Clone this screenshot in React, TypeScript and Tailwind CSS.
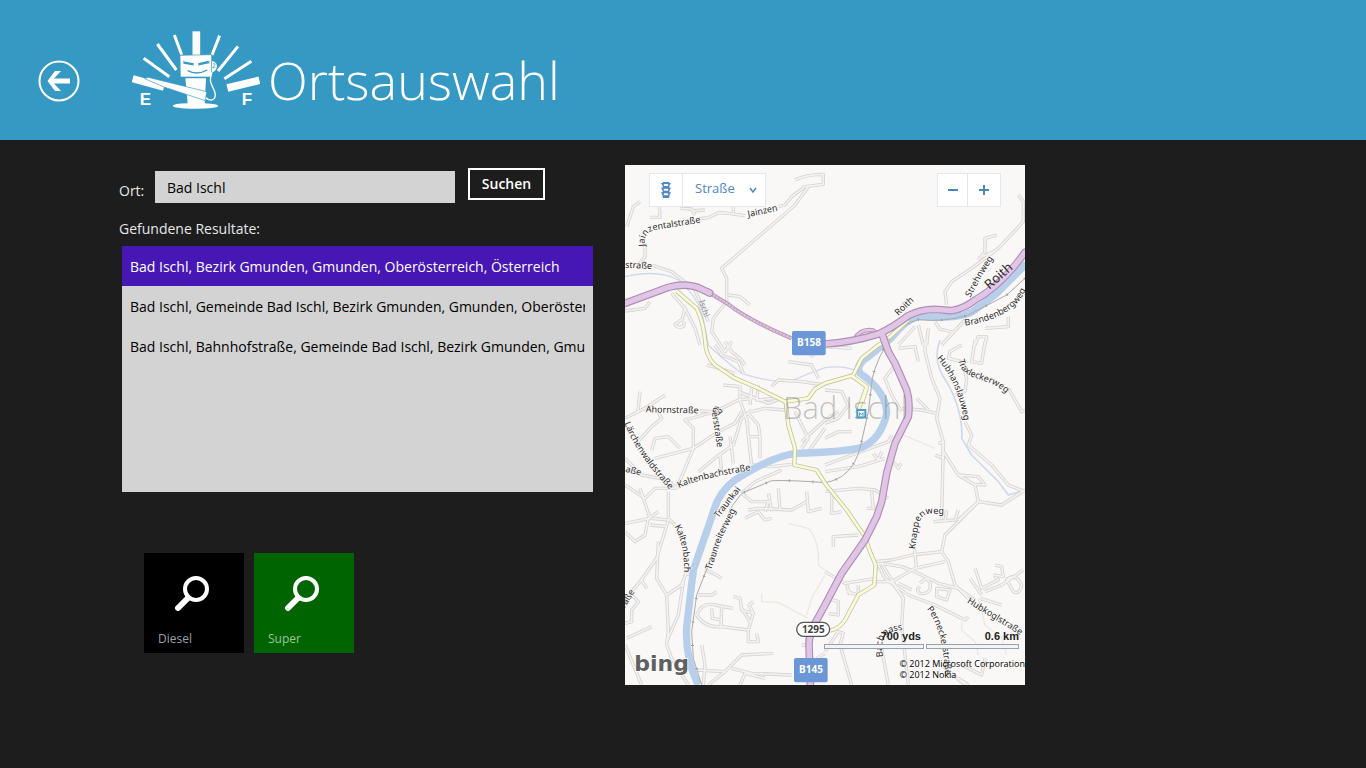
import { useState } from 'react';

const results = [
	'Bad Ischl, Bezirk Gmunden, Gmunden, Oberösterreich, Österreich',
	'Bad Ischl, Gemeinde Bad Ischl, Bezirk Gmunden, Gmunden, Oberösterreich, Österreich',
	'Bad Ischl, Bahnhofstraße, Gemeinde Bad Ischl, Bezirk Gmunden, Gmunden, Oberösterreich',
];

const streets = [
	'M60 235 L60 275 L40 300',
	'M220 162 L250 158 L280 143 L310 145 L360 152',
	'M460 125 L480 120 L500 95 L540 65 L595 58 L595 28 Q545 28 510 45',
	'M550 65 L510 120 L470 155 L290 310 L305 340 L305 410 L265 460 L260 500 L300 560 L320 530',
	'M45 110 L25 125 L5 185',
	'M75 157 L105 157 L103 125',
	'M165 130 L200 132 L210 150 M200 138 L240 135',
	'M325 125 L325 148',
	'M80 300 L140 320 L210 375 L250 470',
	'M140 385 L180 430 L210 490 L225 540',
	'M180 430 L172 462 L150 478 Q155 490 175 485 L178 470',
	'M310 390 L345 395 L375 420',
	'M0 438 L60 430 L75 410',
	'M965 420 L960 380 L980 350 L1040 310 L1120 250 L1195 170 L1195 110 L1180 90',
	'M1115 210 L1080 220 L1080 260 L1060 285 M1060 280 L1110 258',
	'M870 485 L820 540',
	'M880 480 L895 540 M910 490 L905 540',
	'M930 470 L945 492 L985 502 L950 540 M985 502 L1020 465',
	'M1050 540 L1060 515 L1085 515 L1080 540',
	'M1080 490 L1150 485 L1150 455',
	'M0 760 L60 730 L120 690',
	'M45 680 L38 745',
	'M225 738 L270 740 L340 705 L380 700',
	'M30 840 L75 790 L110 760 L95 735',
	'M80 855 L90 820 L130 815 L165 850',
	'M90 880 L205 850 L280 800 L330 775 L350 740',
	'M205 850 L205 790 L180 765 L290 735',
	'M205 850 L155 970',
	'M220 920 L275 875 L325 840 L350 760 L380 735',
	'M285 870 L290 920',
	'M315 815 L325 895',
	'M365 760 L370 815 L380 900',
	'M370 815 L405 815 L405 880 M405 815 L400 780 L370 745',
	'M345 660 L345 705 L370 780',
	'M295 660 L345 665',
	'M380 670 L375 720 M340 680 L430 715 L470 700',
	'M400 660 L395 705 L450 700',
	'M380 740 L420 730 L480 735',
	'M270 540 L290 570 L340 590 L355 625',
	'M300 530 L320 560 L345 580 L360 600',
	'M245 600 L290 612 L330 625',
	'M440 665 L460 645 L530 650 L600 660',
	'M490 590 L560 600 L580 640',
	'M555 575 L600 545 L680 550',
	'M510 740 L550 820 L530 850',
	'M550 860 L600 790 M530 830 L600 765 L640 740',
	'M0 880 L50 930 L130 945 L155 970',
	'M0 960 L60 1000 L90 970 L155 970',
	'M45 970 L75 1060 L0 1075',
	'M130 980 L130 1060',
	'M350 985 L380 1010 L430 1010 L420 1040',
	'M430 985 L440 1040 M460 970 L465 1035',
	'M370 1035 L400 1030 L500 1035 L545 1010',
	'M545 980 L550 1040 L590 1030',
	'M380 900 L440 905 L500 898',
	'M470 915 L390 950 L350 985',
	'M900 525 L900 560 L920 640 L945 700 L935 760 L955 830 L950 1060',
	'M830 730 L890 735 L935 745',
	'M875 700 L910 735',
	'M810 600 L780 640 L800 690 L830 740',
	'M820 550 L870 545 L880 590',
	'M930 870 L955 880 L955 830 L940 835',
	'M955 860 L1000 930 L1050 960 L1060 1010 L1130 1020 L1200 975',
	'M1000 930 L1060 935 L1080 960 L1050 958',
	'M1060 1010 L1000 1065',
	'M1020 770 L1040 810 L1030 840 L1100 900 L1150 960 L1200 980',
	'M1010 540 L975 560 L970 580 L1010 590 L1025 640 L1020 680 L990 690',
	'M1050 525 L1040 590 L1070 595 L1080 530',
	'M1150 670 L1190 740 L1200 735',
	'M600 675 L650 680 L670 720 L640 760 L600 775',
	'M600 820 L640 800 L680 800',
	'M600 900 L680 870 L790 830 L800 810',
	'M600 920 L700 905 L780 880',
	'M745 865 L760 885 L770 860',
	'M805 890 L820 910 L828 895',
	'M600 980 L700 970 L750 975 L790 1000',
	'M740 980 L745 1030 L725 1030',
	'M620 980 L620 1045 L650 1040',
	'M0 1100 L30 1130 L60 1110 L70 1060 L100 1040',
	'M75 1080 L125 1085 M80 1060 L130 1065',
	'M130 1060 L150 1080',
	'M130 1065 L95 1180 L45 1250 L20 1280 L0 1310',
	'M100 1130 L95 1240 L125 1290 L170 1260 L185 1220',
	'M125 1290 L130 1400 L125 1440 L140 1480 L190 1560',
	'M175 1250 L160 1350 L125 1430',
	'M180 1225 L215 1232',
	'M50 1245 L65 1270',
	'M20 1290 L40 1310 L20 1335 L20 1370 L0 1375',
	'M5 1420 L80 1385',
	'M0 1440 L50 1560',
	'M240 1215 L265 1225 L290 1240',
	'M220 1290 L260 1290 L275 1280',
	'M215 1350 Q230 1310 270 1320 L325 1330 M215 1350 Q240 1390 290 1385 L370 1395',
	'M370 1395 L370 1430 L400 1430 L395 1405',
	'M290 1325 L288 1385 M260 1330 L262 1360 L290 1365',
	'M325 1295 L345 1300 L350 1335 L385 1345 L370 1395',
	'M350 1330 L375 1370 M385 1310 L372 1320 L385 1345',
	'M230 1440 L240 1500 L235 1560',
	'M215 1515 L300 1520 L350 1470 L445 1465',
	'M320 1510 L380 1525 L500 1530',
	'M250 1560 L300 1520 M345 1560 L360 1525 L420 1540',
	'M360 1060 L400 1040 L420 1065 L440 1060',
	'M625 1145 L625 1115 L700 1110',
	'M750 1190 L800 1185 L860 1170 L950 1160 L970 1190 L990 1260 L1030 1300',
	'M760 1200 L780 1240 L850 1290 L930 1320 L1020 1365 L1030 1355',
	'M800 1250 L870 1210 L960 1190',
	'M770 1195 L830 1205 L870 1220 L940 1255 L1000 1270 L1050 1305',
	'M770 1195 L800 1245 L835 1300',
	'M868 1150 L875 1215',
	'M950 1160 L960 1110 L1020 1050 L1060 1010',
	'M750 1250 L800 1250 L835 1300 L830 1380 L850 1560',
	'M600 1220 L660 1255 L750 1240 M665 1280 L700 1290 L700 1260 M665 1260 L675 1290',
	'M820 1255 L860 1275',
	'M885 1255 Q905 1230 915 1255 Q920 1290 885 1285 Q870 1275 885 1265',
	'M935 1270 L975 1275 L965 1305 L935 1295 Z',
	'M1050 1210 L1070 1270 L1120 1245 L1110 1235',
	'M1080 1280 L1130 1260 L1195 1215',
	'M1065 1300 L1130 1320 M1035 1240 L1070 1290',
	'M1110 1200 L1130 1205 L1135 1235 L1105 1230',
	'M1145 1245 Q1170 1220 1190 1260 Q1185 1290 1165 1280 Z',
	'M605 1300 L640 1310 L640 1350 L610 1345',
	'M600 1460 L640 1400 L655 1405 L645 1440 L680 1560',
	'M770 1450 L790 1560',
	'M1010 1500 L1070 1530 L1080 1480',
	'M950 1500 L1020 1560 M1000 1540 L1030 1560',
	'M965 1035 L960 1070 M925 1070 L990 1065 L1000 1035',
	'M530 1410 L545 1410 L545 1440 L530 1440',
	'M575 1480 L600 1465',
];

const footpaths = [
	'M490 1075 L550 1090 Q585 1130 580 1200 L600 1215',
	'M410 1285 L410 1310 L460 1312 L550 1360',
	'M600 1230 L560 1300 L545 1350',
	'M1010 1370 L1010 1395 L1050 1430 L1060 1470',
	'M1060 1300 L1080 1380 L1130 1420 L1145 1470',
	'M835 810 L930 850',
];

const mainRoads = [
	'M600 537 Q680 532 760 507 Q800 490 850 452 Q885 433 930 433 L980 437 Q1020 430 1050 405 Q1130 360 1200 262',
	'M772 510 L790 560 L810 595 L845 675 Q856 710 850 755 L810 835 L785 925 L770 1010 L755 1055 L720 1125 L650 1225 L600 1320 L570 1375 Q552 1410 552 1440 L556 1560',
	'M0 415 L130 367 Q185 352 225 370 L254 384',
];

const yellowRoads = [
	'M155 378 L215 430 Q235 470 240 525 Q242 575 270 600 L330 640 L400 670 L480 710 L550 700 L570 672 L600 655 L680 632 L725 665 L697 745',
	'M685 630 L710 580 L760 540 L790 527',
	'M482 710 L490 780 L510 850 L508 900 L575 915 L600 955 L665 1035 L720 1115 L735 1160 L752 1200 L748 1260 L700 1290 L660 1365 Q645 1390 615 1397',
	'M790 520 L850 465',
	'M725 670 L712 710',
];

const river =
	'M1204 296 L1114 386 L1044 439 Q1000 464 880 454 Q840 464 800 518 L730 575 Q690 600 705 625 Q785 680 785 745 Q770 820 710 848 Q650 862 510 865 Q440 875 330 945 Q280 980 262 1050 L205 1215 L185 1385 Q180 1480 220 1560';

const railway =
	'M1200 340 L1145 390 L1030 450 Q960 472 880 464 Q830 478 800 515 Q755 580 742 640 L730 740 L705 850 Q680 940 600 953 Q500 945 440 947 L350 985 L320 1025 L250 1200 L215 1290 L200 1400 L205 1480 L230 1560';

type StreetLabel = { id: string; text: string; d: string };

const labels: StreetLabel[] = [
	{ id: 'jainzental', text: 'Jainzentalstraße', d: 'M60 244 Q54 200 95 194 L240 170' },
	{ id: 'jainzen', text: 'Jainzen', d: 'M370 156 L490 130' },
	{ id: 'strasse', text: 'straße', d: 'M0 308 L110 314' },
	{ id: 'roith', text: 'Roith', d: 'M820 453 L900 375' },
	{ id: 'strehnweg', text: 'Strehnweg', d: 'M1036 398 L1070 335 L1130 240' },
	{ id: 'brandenberg', text: 'Brandenbergweg', d: 'M1020 482 Q1165 460 1202 375 L1210 350' },
	{ id: 'hubhanslau', text: 'Hubhanslauweg', d: 'M935 580 Q1000 655 1016 765 L1018 790' },
	{ id: 'traxlecker', text: 'Traxleckerweg', d: 'M1000 585 C1012 655 1080 625 1150 690' },
	{ id: 'ahorn', text: 'Ahornstraße', d: 'M62 742 L250 746' },
	{ id: 'bauer', text: 'Bauerstraße', d: 'M294 742 C276 712 256 722 264 765 L286 910' },
	{ id: 'laerchenwald', text: 'Lärchenwaldstraße', d: 'M-2 775 Q40 880 150 990' },
	{ id: 'asse', text: 'aße', d: 'M0 920 L70 938' },
	{ id: 'kaltenbachstr', text: 'Kaltenbachstraße', d: 'M162 970 Q210 942 400 912' },
	{ id: 'traunkai', text: 'Traunkai', d: 'M280 1060 L370 945' },
	{ id: 'traunreiter', text: 'Traunreiterweg', d: 'M258 1216 L290 1120 L345 1010' },
	{ id: 'kaltenbach', text: 'Kaltenbach', d: 'M148 1085 Q182 1140 176 1235' },
	{ id: 'rasse', text: 'raße', d: 'M0 1330 L50 1245' },
	{ id: 'knappen', text: 'Knappenweg', d: 'M870 1153 L880 1085 Q886 1044 925 1046 L980 1048' },
	{ id: 'hubkogl', text: 'Hubkoglstraße', d: 'M1025 1312 L1210 1425' },
	{ id: 'pernecker', text: 'Perneckerstraße', d: 'M905 1332 Q955 1390 962 1545' },
	{ id: 'bachgasse', text: 'Bachgasse', d: 'M774 1475 C766 1420 772 1400 840 1394' },
];

const Logo = () => (
	<svg viewBox="336 32 384 237" className="w-32 shrink-0" fill="#fff" role="img" aria-label="Tankanzeige">
		<g stroke="#fff" strokeWidth="9">
			<path d="M371 114 L448 169 M412 71 L469 149 M463 44 L485 103 M599 46 L576 104 M654 78 L594 152 M694 123 L613 175" />
			<path d="M529 33 L529 106" strokeWidth="23" />
			<path d="M622 203 L718 180" strokeWidth="23" />
			<path d="M338 175 L432 201" strokeWidth="22" />
		</g>
		<path d="M480 105 L575 103 L575 170 L481 170 Z" stroke="#3699c4" strokeWidth="2" />
		<path d="M496 174 L558 174 L554 249 Q595 251 595 257 Q590 265 526 265 Q460 264 458 256 Q460 250 503 249 Z" />
		<path d="M384 171 L560 214 L556 241 L432 200 L374 175 Z" stroke="#3699c4" strokeWidth="2" />
		<path d="M576 122 Q592 126 591 140 Q586 154 576 156 Z" />
		<path d="M578 130 L586 131 L578 143 L587 140" fill="none" stroke="#3699c4" strokeWidth="2" />
		<path d="M576 156 Q566 180 577 198 Q596 234 574 239 Q562 239 558 232" fill="none" stroke="#fff" strokeWidth="4" />
		<g fill="none" stroke="#3699c4">
			<path d="M492 127 L521 132 M535 132 L566 125" strokeWidth="7" />
			<path d="M503 151 Q530 166 562 149" strokeWidth="4" />
			<path d="M491 121 L491 130 M567 121 L567 130" strokeWidth="2" />
		</g>
		<text x="359" y="254" fontSize="51" fontWeight="700" fontFamily="'Liberation Sans', sans-serif">
			E
		</text>
		<text x="665" y="254" fontSize="51" fontWeight="700" fontFamily="'Liberation Sans', sans-serif">
			F
		</text>
	</svg>
);

const StreetMap = () => (
	<svg viewBox="0 0 1200 1560" className="block w-full" fontFamily="'Noto Sans', sans-serif" role="img" aria-label="Karte von Bad Ischl">
		<rect width="1200" height="1560" fill="#faf8f7" />
		<g fill="none" strokeLinejoin="round">
			<path d="M0 335 Q100 312 160 345 Q215 390 232 450 L250 540 Q290 580 350 625 Q440 655 500 648 Q550 625 600 608 Q660 600 700 620" stroke="#cdd9ee" strokeWidth="4" />
			<path d="M945 525 Q920 590 965 650 Q1015 740 1010 820 L1040 870 L1120 950 L1150 990 L1200 975" stroke="#cdd9ee" strokeWidth="5" />
			<g stroke="#ece8de" strokeWidth="4">
				{footpaths.map((d) => (
					<path key={d} d={d} />
				))}
			</g>
			<g stroke="#d5d3d2" strokeWidth="10">
				{streets.map((d) => (
					<path key={d} d={d} />
				))}
			</g>
			<g stroke="#f5f3f2" strokeWidth="5">
				{streets.map((d) => (
					<path key={d} d={d} />
				))}
			</g>
			<path d={river} stroke="#b7cfeb" strokeWidth="22" />
			<path d={railway} stroke="#aaa" strokeWidth="3" />
			<path d={railway} stroke="#999" strokeWidth="8" strokeDasharray="3 68" />
			<g stroke="#c3c49e" strokeWidth="13">
				{yellowRoads.map((d) => (
					<path key={d} d={d} />
				))}
			</g>
			<g stroke="#fbfad9" strokeWidth="8">
				{yellowRoads.map((d) => (
					<path key={d} d={d} />
				))}
			</g>
			<path d="M254 384 L310 418 Q360 460 500 520" stroke="#b794b7" strokeWidth="12" />
			<path d="M254 384 L310 418 Q360 460 500 520" stroke="#dcbfdc" strokeWidth="7" strokeDasharray="9 2" />
			<path d="M690 522 Q705 490 745 496 L775 520" stroke="#b794b7" strokeWidth="13" />
			<path d="M690 522 Q705 490 745 496 L775 520" stroke="#e3c8e6" strokeWidth="7" />
			<g stroke="#b08fb4" strokeWidth="23" strokeLinecap="round">
				{mainRoads.map((d) => (
					<path key={d} d={d} />
				))}
			</g>
			<g stroke="#e0c5e6" strokeWidth="16" strokeLinecap="round">
				{mainRoads.map((d) => (
					<path key={d} d={d} />
				))}
			</g>
		</g>

		<text x="474" y="761" fontSize="93" fill="#888" fillOpacity="0.5" fontFamily="'Open Sans', sans-serif" fontWeight="300">
			Bad Ischl
		</text>
		<rect x="697" y="735" width="24" height="22" fill="#fff" stroke="#4a9cc4" strokeWidth="6" />
		<path d="M704 753 V743 L709 749 L714 743 V753" fill="none" stroke="#4a9cc4" strokeWidth="3" />

		<g fontSize="27" fill="#2b2b2b" stroke="#faf8f7" strokeWidth="4" paintOrder="stroke" strokeLinejoin="round">
			{labels.map((label) => (
				<g key={label.id}>
					<path id={label.id} d={label.d} fill="none" stroke="none" />
					<text>
						<textPath href={`#${label.id}`}>{label.text}</textPath>
					</text>
				</g>
			))}
		</g>
		<path id="roith-main" d="M1093 374 L1200 280" fill="none" />
		<text fontSize="39" fill="#2b2b2b">
			<textPath href="#roith-main">Roith</textPath>
		</text>
		<path id="ischl-river" d="M222 408 L250 490" fill="none" />
		<text fontSize="24" fill="#7d8796">
			<textPath href="#ischl-river">Ischl</textPath>
		</text>

		<g fontWeight="700" textAnchor="middle">
			<rect x="501" y="498" width="101" height="73" rx="6" fill="#6b96d8" />
			<text x="552" y="543" fontSize="30" fill="#fff">
				B158
			</text>
			<rect x="507" y="1479" width="101" height="73" rx="6" fill="#6b96d8" />
			<text x="558" y="1524" fontSize="30" fill="#fff">
				B145
			</text>
			<rect x="515" y="1372" width="99" height="42" rx="21" fill="#fff" stroke="#555" strokeWidth="4" />
			<text x="565" y="1403" fontSize="30" fill="#444">
				1295
			</text>
		</g>
		<text x="28" y="1518" fontSize="66" fontWeight="700" fill="#606060" stroke="#fff" strokeWidth="4" paintOrder="stroke" fontFamily="'DejaVu Sans', sans-serif">
			bing
		</text>
	</svg>
);

const SearchIcon = () => (
	<svg viewBox="0 0 36 36" className="h-9 w-9" fill="none" stroke="#fff" strokeLinecap="round" aria-hidden="true">
		<circle cx="22" cy="14" r="11" strokeWidth="4" />
		<path d="M14 23 L4 33" strokeWidth="6" />
	</svg>
);

const App = () => {
	const [place, setPlace] = useState<string>('Bad Ischl');
	const [selected, setSelected] = useState<number>(0);

	return (
		<div className="min-h-screen bg-[#1d1d1d] font-['Open_Sans',sans-serif] text-sm text-white">
			<header className="flex h-[140px] items-center bg-[#3699c4] pl-[38px]">
				<button aria-label="Zurück" className="mt-[22px] mr-[52px] cursor-pointer">
					<svg viewBox="0 0 42 42" className="h-[42px] w-[42px]" fill="none" stroke="#fff" aria-hidden="true">
						<circle cx="21" cy="21" r="19.500" strokeWidth="2" />
						<path d="M32 21 H14" strokeWidth="5" />
						<path d="M17 11 H23 L16 18.500 V23.500 L23 31 H17 L9.500 21 Z" fill="#fff" stroke="none" />
					</svg>
				</button>
				<Logo />
				<h1 className="mt-5 ml-2 text-[52px] leading-[64px] font-light">Ortsauswahl</h1>
			</header>

			<main className="flex flex-wrap pt-[25px] pl-[119px]">
				<section className="w-[506px]">
					<form className="flex h-[38px] items-end pt-[3px]" onSubmit={(event) => event.preventDefault()}>
						<label htmlFor="place" className="w-9 leading-6 text-gray-200">
							Ort:
						</label>
						<input
							id="place"
							value={place}
							onChange={(event) => setPlace(event.target.value)}
							className="h-8 w-[300px] bg-[#d3d3d3] px-3 text-black outline-none"
						/>
						<button className="ml-[13px] h-8 w-[77px] cursor-pointer self-start border-2 border-white font-semibold">Suchen</button>
					</form>

					<h2 className="mt-3 leading-7 text-gray-200">Gefundene Resultate:</h2>
					<ul className="mt-[3px] ml-[3px] h-[246px] w-[471px] bg-[#d3d3d3] text-black">
						{results.map((result, index) => (
							<li key={result}>
								<button
									aria-pressed={index === selected}
									onClick={() => setSelected(index)}
									className={`block h-10 w-full cursor-pointer px-2 pt-[2px] text-left ${index === selected ? 'bg-[#4617b4] text-white' : ''}`}>
									<span className="block overflow-hidden whitespace-nowrap">{result}</span>
								</button>
							</li>
						))}
					</ul>

					<div className="mt-[61px] ml-[25px] flex gap-[10px] text-xs text-gray-400">
						<button className="flex h-[100px] w-[100px] cursor-pointer flex-col justify-between bg-black pt-[22px] pb-[6px] pl-[14px] text-left">
							<span className="pl-4">
								<SearchIcon />
							</span>
							Diesel
						</button>
						<button className="flex h-[100px] w-[100px] cursor-pointer flex-col justify-between bg-[#006400] pt-[22px] pb-[6px] pl-[14px] text-left text-[#9cc69c]">
							<span className="pl-4">
								<SearchIcon />
							</span>
							Super
						</button>
					</div>
				</section>

				<section className="relative w-[400px] self-start overflow-hidden">
					<StreetMap />

					<div className="absolute top-2 left-6 flex h-[34px] border border-gray-200 bg-white text-[#4e87c4]">
						<button aria-label="Verkehr" className="flex w-[33px] cursor-pointer items-center justify-center border-r border-gray-200">
							<svg viewBox="0 0 30 48" className="h-4 w-[10px]" aria-hidden="true">
								<path d="M5 0 H25 V3 H30 L25 12 V17 H30 L25 27 V31 H30 L25 41 V48 H5 V41 L0 31 H5 V27 L0 17 H5 V12 L0 3 H5 Z" fill="#4e87c4" />
								<path d="M11 9 H19 M11 23 H19 M11 37 H19" stroke="#fff" strokeWidth="6" strokeLinecap="round" />
							</svg>
						</button>
						<span className="relative flex items-center">
							<select aria-label="Kartenansicht" className="h-full w-[82px] cursor-pointer appearance-none pb-1 pl-3 text-[13px] outline-none">
								<option>Straße</option>
								<option>Luftbild</option>
							</select>
							<svg viewBox="0 0 8 8" className="pointer-events-none absolute right-2 h-2 w-2" fill="none" stroke="#4e87c4" strokeWidth="1.500" aria-hidden="true">
								<path d="M1 2 L4 6 L7 2" />
							</svg>
						</span>
					</div>

					<div className="absolute top-2 right-6 flex h-[34px] border border-gray-200 bg-white">
						<button aria-label="Verkleinern" className="flex w-[30px] cursor-pointer items-center justify-center border-r border-gray-200">
							<svg viewBox="0 0 10 10" className="h-[10px] w-[10px]" stroke="#4d88b8" strokeWidth="2" aria-hidden="true">
								<path d="M0 5 H10" />
							</svg>
						</button>
						<button aria-label="Vergrößern" className="flex w-8 cursor-pointer items-center justify-center">
							<svg viewBox="0 0 10 10" className="h-[10px] w-[10px]" stroke="#4d88b8" strokeWidth="2" aria-hidden="true">
								<path d="M0 5 H10 M5 0 V10" />
							</svg>
						</button>
					</div>

					<div className="absolute right-[6px] bottom-9 flex gap-[2px] text-right font-['Liberation_Sans',sans-serif] text-[11px] leading-4 font-bold text-[#222]">
						<div className="w-[100px]">
							<p className="pr-[3px]">700 yds</p>
							<div className="h-[5px] border border-gray-400 bg-gray-100" />
						</div>
						<div className="w-[93px]">
							<p>0.6 km</p>
							<div className="h-[5px] border border-gray-400 bg-gray-100" />
						</div>
					</div>
					<p className="absolute right-0 bottom-[5px] text-[9px] leading-[11px] whitespace-nowrap text-black">
						© 2012 Microsoft Corporation
						<br />© 2012 Nokia
					</p>
				</section>
			</main>
		</div>
	);
};

export default App;
